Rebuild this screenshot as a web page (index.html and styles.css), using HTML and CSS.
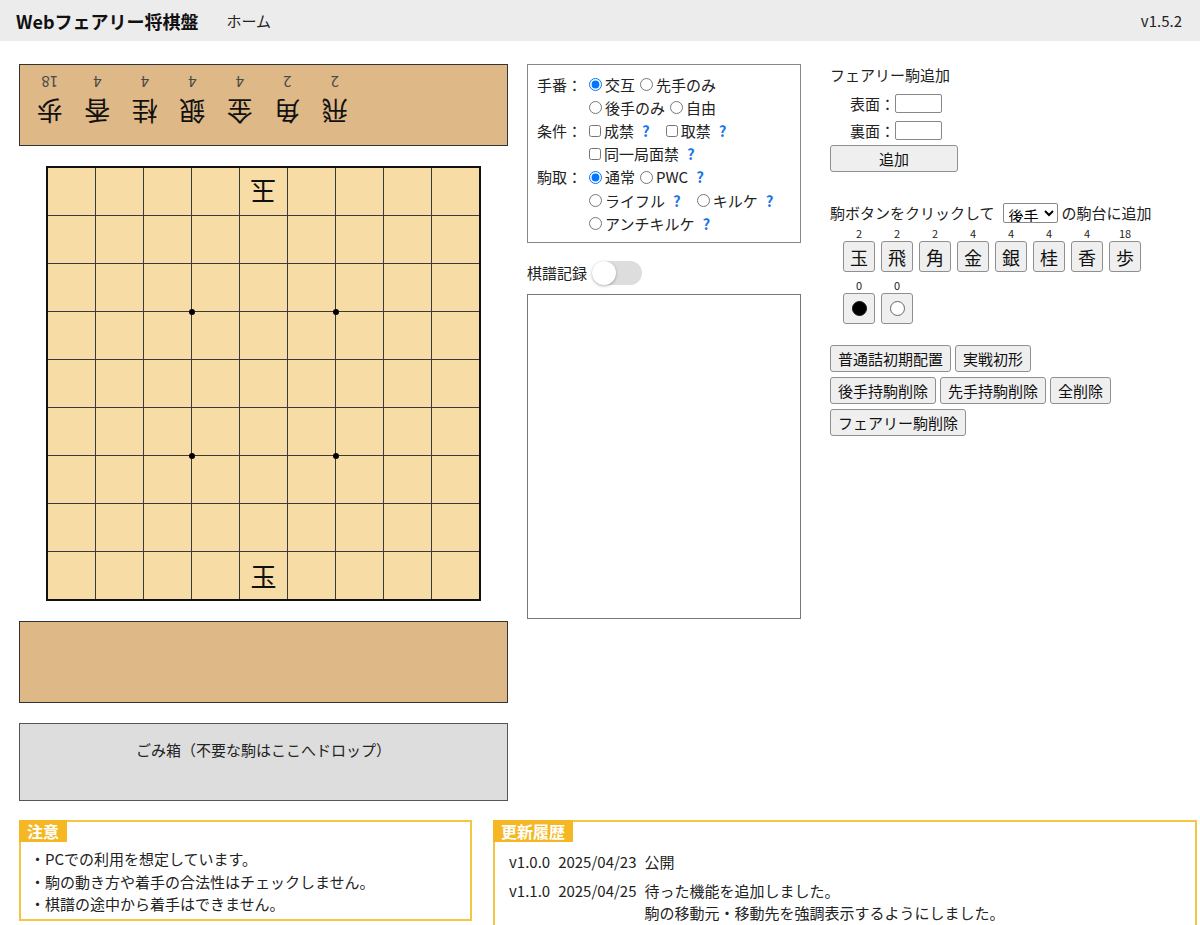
FILE: index.html
```html
<!DOCTYPE html>
<html lang="ja">
<head>
  <meta charset="UTF-8" />
  <meta name="viewport" content="width=device-width, initial-scale=1.0"/>
  <title>Webフェアリー将棋盤</title>
  <link rel="stylesheet" href="styles.css">
</head>
<body>
  <header class="topbar">
    <div class="brand">Webフェアリー将棋盤</div>
    <a class="nav" href="#">ホーム</a>
    <div class="version">v1.5.2</div>
  </header>

  <main class="layout">
    <!-- 盤と駒台 -->
    <section class="board-col">
      <div class="stand stand-gote">
        <div class="stand-piece"><span class="kanji">飛</span><span class="count">2</span></div>
        <div class="stand-piece"><span class="kanji">角</span><span class="count">2</span></div>
        <div class="stand-piece"><span class="kanji">金</span><span class="count">4</span></div>
        <div class="stand-piece"><span class="kanji">銀</span><span class="count">4</span></div>
        <div class="stand-piece"><span class="kanji">桂</span><span class="count">4</span></div>
        <div class="stand-piece"><span class="kanji">香</span><span class="count">4</span></div>
        <div class="stand-piece"><span class="kanji">歩</span><span class="count">18</span></div>
      </div>

      <div class="board" id="board"></div>

      <div class="stand stand-sente"></div>

      <div class="trash">ごみ箱（不要な駒はここへドロップ）</div>
    </section>

    <!-- ルール設定と棋譜 -->
    <section class="mid-col">
      <div class="rules">
        <div class="rule-row">
          <span class="rule-label">手番：</span>
          <label><input type="radio" name="turn" checked>交互</label><label><input type="radio" name="turn">先手のみ</label>
        </div>
        <div class="rule-row indent">
          <label><input type="radio" name="turn">後手のみ</label><label><input type="radio" name="turn">自由</label>
        </div>
        <div class="rule-row">
          <span class="rule-label">条件：</span>
          <label><input type="checkbox">成禁</label><span class="help">?</span><label class="after-help"><input type="checkbox">取禁</label><span class="help">?</span>
        </div>
        <div class="rule-row indent">
          <label><input type="checkbox">同一局面禁</label><span class="help">?</span>
        </div>
        <div class="rule-row">
          <span class="rule-label">駒取：</span>
          <label><input type="radio" name="capture" checked>通常</label><label><input type="radio" name="capture">PWC</label><span class="help">?</span>
        </div>
        <div class="rule-row indent">
          <label><input type="radio" name="capture">ライフル</label><span class="help">?</span><label class="after-help"><input type="radio" name="capture">キルケ</label><span class="help">?</span>
        </div>
        <div class="rule-row indent">
          <label><input type="radio" name="capture">アンチキルケ</label><span class="help">?</span>
        </div>
      </div>

      <div class="kifu-head">
        <span>棋譜記録</span>
        <span class="switch"></span>
      </div>
      <div class="kifu"></div>
    </section>

    <!-- 駒の追加・配置 -->
    <section class="right-col">
      <div class="fairy-title">フェアリー駒追加</div>
      <div class="fairy-field"><span class="field-label">表面：</span><input type="text" class="fairy-input"></div>
      <div class="fairy-field"><span class="field-label">裏面：</span><input type="text" class="fairy-input"></div>
      <button class="btn add-btn">追加</button>

      <div class="palette-head">
        <span>駒ボタンをクリックして</span>
        <select class="side-select">
          <option>後手</option>
          <option>先手</option>
        </select>
        <span>の駒台に追加</span>
      </div>

      <div class="palette">
        <div class="palette-item"><span class="palette-count">2</span><button class="btn palette-btn">玉</button></div>
        <div class="palette-item"><span class="palette-count">2</span><button class="btn palette-btn">飛</button></div>
        <div class="palette-item"><span class="palette-count">2</span><button class="btn palette-btn">角</button></div>
        <div class="palette-item"><span class="palette-count">4</span><button class="btn palette-btn">金</button></div>
        <div class="palette-item"><span class="palette-count">4</span><button class="btn palette-btn">銀</button></div>
        <div class="palette-item"><span class="palette-count">4</span><button class="btn palette-btn">桂</button></div>
        <div class="palette-item"><span class="palette-count">4</span><button class="btn palette-btn">香</button></div>
        <div class="palette-item"><span class="palette-count">18</span><button class="btn palette-btn">歩</button></div>
      </div>
      <div class="palette palette-stones">
        <div class="palette-item"><span class="palette-count">0</span><button class="btn palette-btn"><span class="stone black"></span></button></div>
        <div class="palette-item"><span class="palette-count">0</span><button class="btn palette-btn"><span class="stone white"></span></button></div>
      </div>

      <div class="actions">
        <div class="action-row">
          <button class="btn action-btn">普通詰初期配置</button>
          <button class="btn action-btn">実戦初形</button>
        </div>
        <div class="action-row">
          <button class="btn action-btn">後手持駒削除</button>
          <button class="btn action-btn">先手持駒削除</button>
          <button class="btn action-btn">全削除</button>
        </div>
        <div class="action-row">
          <button class="btn action-btn">フェアリー駒削除</button>
        </div>
      </div>
    </section>
  </main>

  <footer class="notes">
    <div class="note-box caution">
      <div class="note-title">注意</div>
      <ul class="note-list">
        <li>・PCでの利用を想定しています。</li>
        <li>・駒の動き方や着手の合法性はチェックしません。</li>
        <li>・棋譜の途中から着手はできません。</li>
      </ul>
    </div>
    <div class="note-box history">
      <div class="note-title">更新履歴</div>
      <table class="history-table">
        <tr>
          <td>v1.0.0</td>
          <td>2025/04/23</td>
          <td>公開</td>
        </tr>
        <tr>
          <td>v1.1.0</td>
          <td>2025/04/25</td>
          <td>待った機能を追加しました。<br>駒の移動元・移動先を強調表示するようにしました。</td>
        </tr>
      </table>
    </div>
  </footer>

  <script>
    // 初期配置（1段目が後手側）
    const position = {
      4: { kanji: "玉", gote: true },
      76: { kanji: "玉", gote: false }
    };

    const board = document.getElementById("board");

    for (let i = 0; i < 81; i++) {
      const cell = document.createElement("div");
      cell.className = "cell";
      const piece = position[i];
      if (piece) {
        const span = document.createElement("span");
        span.className = piece.gote ? "piece gote" : "piece";
        span.textContent = piece.kanji;
        cell.appendChild(span);
      }
      board.appendChild(cell);
    }

    // 星（3筋・6筋 × 3段・6段の交点）
    [[0, 0], [1, 0], [0, 1], [1, 1]].forEach(([x, y]) => {
      const star = document.createElement("div");
      star.className = "star star-x" + x + " star-y" + y;
      board.appendChild(star);
    });
  </script>
</body>
</html>
```

FILE: styles.css
```css
body {
  margin: 0;
  font-family: "Noto Sans CJK JP", "Noto Sans", sans-serif;
  font-size: 15px;
  line-height: 22px;
  color: #222;
  background-color: #fff;
}

/* ヘッダー */
.topbar {
  display: flex;
  align-items: center;
  height: 41px;
  padding: 0 18px 0 16px;
  background-color: #ececec;
}

.brand {
  font-size: 18px;
  font-weight: bold;
  color: #111;
}

.nav {
  margin-left: 28px;
  color: #222;
  text-decoration: none;
}

.version {
  margin-left: auto;
}

.layout {
  display: flex;
  align-items: flex-start;
  padding: 23px 0 0 19px;
}

/* 盤と駒台 */
.board-col {
  width: 489px;
  display: flex;
  flex-direction: column;
  gap: 20px;
}

.stand {
  height: 82px;
  box-sizing: border-box;
  border: 1px solid #333;
  background-color: #deb887;
}

/* 後手の駒台は盤の向こう側なので逆さに置く */
.stand-gote {
  display: flex;
  justify-content: flex-end;
  align-items: flex-end;
  padding: 0 6px 6px;
  transform: rotate(180deg);
}

.stand-piece {
  width: 47.5px;
  display: flex;
  flex-direction: column;
  align-items: center;
}

.stand-piece .kanji {
  font-size: 26px;
  line-height: 38px;
  color: #111;
}

.stand-piece .count {
  font-size: 15px;
  line-height: 22px;
  color: #4a4a4a;
}

.board {
  position: relative;
  align-self: center;
  display: grid;
  grid-template-columns: repeat(9, 47px);
  grid-auto-rows: 47px;
  gap: 1px;
  background-color: #3a3a3a;
  border: 2px solid #111;
}

.cell {
  display: flex;
  align-items: center;
  justify-content: center;
  background-color: #f8dca5;
}

.piece {
  font-size: 26px;
  line-height: 30px;
  color: #111;
}

.piece.gote {
  transform: rotate(180deg);
}

.star {
  position: absolute;
  width: 6px;
  height: 6px;
  border-radius: 50%;
  background-color: #000;
}

.star-x0 { left: 140.5px; }
.star-x1 { left: 284.5px; }
.star-y0 { top: 140.5px; }
.star-y1 { top: 284.5px; }

.trash {
  height: 78px;
  box-sizing: border-box;
  padding-top: 15px;
  border: 1px solid #555;
  background-color: #dddddd;
  text-align: center;
}

/* ルール設定 */
.mid-col {
  width: 274px;
  margin-left: 19px;
}

.rules {
  border: 1px solid #888;
  padding: 8px 9px 7px;
}

.rule-row {
  display: flex;
  align-items: center;
  height: 23.2px;
  white-space: nowrap;
}

.rule-row.indent {
  padding-left: 47px;
}

.rule-label {
  width: 47px;
}

.rule-row label {
  display: flex;
  align-items: center;
}

.rule-row input {
  margin: 0 3px 0 5px;
}

.rule-row input[type="checkbox"] {
  width: 12px;
  height: 12px;
}

.rule-row .after-help {
  margin-left: 11px;
}

.help {
  margin-left: 8px;
  color: #1a73e8;
  font-weight: bold;
}

.kifu-head {
  display: flex;
  align-items: center;
  height: 24px;
  margin-top: 18px;
}

.switch {
  position: relative;
  width: 50px;
  height: 24px;
  margin-left: 5px;
  border-radius: 12px;
  background-color: #ddd;
}

.switch::after {
  content: "";
  position: absolute;
  left: 0;
  top: 0;
  width: 24px;
  height: 24px;
  border-radius: 50%;
  background-color: #fff;
  box-shadow: 0 1px 3px rgba(0, 0, 0, 0.3);
}

.kifu {
  height: 325px;
  margin-top: 9px;
  box-sizing: border-box;
  border: 1px solid #777;
}

/* 駒の追加 */
.right-col {
  margin-left: 29px;
}

.btn {
  font-family: inherit;
  font-size: 15px;
  color: #111;
  background-color: #efefef;
  border: 1px solid #8f8f8f;
  border-radius: 3px;
}

.fairy-title {
  margin-bottom: 4px;
}

.fairy-field {
  display: flex;
  align-items: center;
  height: 27px;
  padding-left: 20px;
}

.field-label {
  width: 45px;
}

.fairy-input {
  width: 47px;
  height: 19px;
  box-sizing: border-box;
  border: 1px solid #888;
  border-radius: 2px;
  padding: 0 2px;
}

.add-btn {
  display: block;
  width: 128px;
  height: 27px;
  margin-top: 1px;
}

.palette-head {
  display: flex;
  align-items: center;
  margin-top: 30px;
  white-space: nowrap;
}

.side-select {
  height: 20px;
  margin: 0 4px 0 8px;
  padding: 0 1px;
  font-family: inherit;
  font-size: 15px;
  border: 1px solid #888;
  border-radius: 2px;
  background-color: #fff;
}

.palette {
  display: flex;
  gap: 6px;
  margin-left: 13px;
  margin-top: 2px;
}

.palette-stones {
  margin-top: 6px;
}

.palette-item {
  display: flex;
  flex-direction: column;
  align-items: center;
  width: 32px;
}

.palette-count {
  font-size: 11px;
  line-height: 14px;
}

.palette-btn {
  display: flex;
  align-items: center;
  justify-content: center;
  width: 32px;
  height: 31px;
  margin-top: 1px;
  padding: 0;
  font-size: 18px;
}

.stone {
  width: 15px;
  height: 15px;
  box-sizing: border-box;
  border-radius: 50%;
  border: 1px solid #111;
}

.stone.black {
  background-color: #000;
}

.stone.white {
  border-color: #666;
  background-color: #fff;
}

.actions {
  display: flex;
  flex-direction: column;
  gap: 5px;
  margin-top: 21px;
}

.action-row {
  display: flex;
  gap: 4px;
}

.action-btn {
  height: 27px;
  padding: 0 7px;
  white-space: nowrap;
}

/* 注意・更新履歴 */
.notes {
  display: flex;
  align-items: flex-start;
  gap: 21px;
  margin-top: 19px;
  padding: 0 3px 0 19px;
}

.note-box {
  box-sizing: border-box;
  border: 2px solid #f4c646;
}

.caution {
  width: 453px;
}

.history {
  flex: 1;
}

.note-title {
  display: inline-block;
  height: 22px;
  margin: -2px 0 0 -2px;
  padding: 0 8px;
  font-size: 16px;
  line-height: 22px;
  font-weight: bold;
  color: #fff;
  background-color: #f5b723;
  vertical-align: top;
}

.note-list {
  list-style: none;
  margin: 0;
  padding: 4px 0 3px 9px;
  line-height: 22.5px;
}

.history-table {
  border-collapse: collapse;
  margin: 4px 0 4px 10px;
  line-height: 22.5px;
}

.history-table td {
  padding: 3px 4px;
  vertical-align: top;
  white-space: nowrap;
}
```
